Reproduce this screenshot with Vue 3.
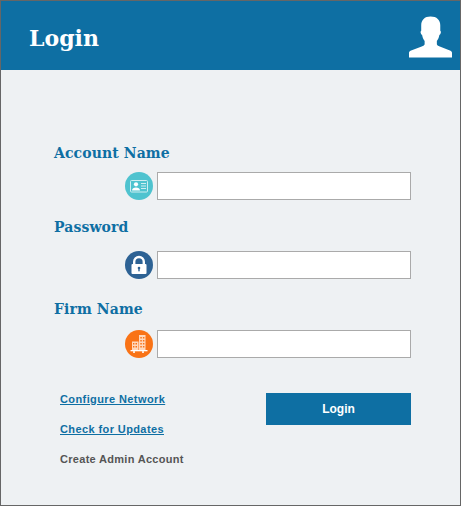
<script setup>
const fields = [
  { label: 'Account Name', icon: 'card', gap: 'first' },
  { label: 'Password', icon: 'lock', gap: 'second' },
  { label: 'Firm Name', icon: 'firm', gap: 'third' },
]
</script>

<template>
  <div class="login">
    <header class="head">
      <h1 class="title">Login</h1>
      <svg class="avatar" viewBox="0 0 44 42" width="43" height="42">
        <path fill="#fff" d="M22 0c-6 0-9.500 3.500-9.500 9v5.500c-.8.300-.8 1.800-.3 3 .4 1 1 1.500 1.300 1.700.4 2.300 1.300 4.300 2.500 5.800v3.300c0 .8-1.200 1.700-3 2.500L1.500 35C.5 35.500 0 36.300 0 37.300V42h44v-4.700c0-1-.5-1.800-1.500-2.300L31.500 30.800c-1.800-.8-3-1.700-3-2.500V25c1.200-1.500 2.100-3.500 2.500-5.800.3-.2.900-.7 1.300-1.700.5-1.200.5-2.700-.3-3V9c0-5.500-3.500-9-10-9z"/>
      </svg>
    </header>

    <form class="form" @submit.prevent>
      <div v-for="field in fields" :key="field.label" class="field" :class="field.gap">
        <label class="label">{{ field.label }}</label>
        <div class="row">
          <span class="badge" :class="field.icon">
            <svg v-if="field.icon === 'card'" viewBox="0 0 28 28" width="28" height="28">
              <rect x="5.500" y="8.500" width="17" height="11.500" rx="1" fill="none" stroke="#cfeef1" stroke-width="1"/>
              <circle cx="11" cy="12.300" r="2.100" fill="#fff"/>
              <path fill="#fff" d="M7 18.500c0-2 1.800-3 4-3s4 1 4 3z"/>
              <path stroke="#cfeef1" stroke-width="1" d="M16 11.500h5M16 14h5M16 16.500h5"/>
            </svg>
            <svg v-else-if="field.icon === 'lock'" viewBox="0 0 28 28" width="28" height="28">
              <path fill="none" stroke="#fff" stroke-width="2.400" d="M9.200 13V10.800a4.800 4.800 0 0 1 9.600 0V13"/>
              <rect x="6.500" y="13" width="15" height="10" rx="1" fill="#fff"/>
              <circle cx="14" cy="17" r="1.300" fill="#2d6294"/>
              <rect x="13.300" y="17" width="1.400" height="3.300" fill="#2d6294"/>
            </svg>
            <svg v-else viewBox="0 0 28 28" width="28" height="28">
              <path fill="#ffd9bd" fill-rule="evenodd" d="M14 5h6.500v15H14zM15.300 7v1.600h1.500V7zm2.600 0v1.600h1.500V7zm-2.600 3v1.600h1.500V10zm2.600 0v1.600h1.500V10zm-2.600 3v1.600h1.500V13zm2.600 0v1.600h1.500V13zm-2.600 3v1.600h1.500V16zm2.600 0v1.600h1.500V16z"/>
              <path fill="#ffd9bd" fill-rule="evenodd" d="M7 11.500h6.500V20H7zM8 13v1.400h1.400V13zm2.500 0v1.400H12V13zM8 16v1.400h1.400V16zm2.500 0v1.400H12V16z"/>
              <rect x="5.500" y="20" width="17" height="1.300" fill="#fff"/>
              <rect x="8" y="21.300" width="2" height="1.500" fill="#fff"/>
              <rect x="17" y="21.300" width="2" height="1.500" fill="#fff"/>
            </svg>
          </span>
          <input class="input" type="text" />
        </div>
      </div>

      <div class="actions">
        <nav class="links">
          <a class="link" href="#">Configure Network</a>
          <a class="link" href="#">Check for Updates</a>
          <span class="plain">Create Admin Account</span>
        </nav>
        <button class="submit" type="submit">Login</button>
      </div>
    </form>
  </div>
</template>

<style>
html, body {
  background: #fff;
}
</style>

<style scoped>
.login {
  box-sizing: border-box;
  width: 461px;
  height: 506px;
  border: 1px solid #666;
  background: #eef1f3;
  display: flex;
  flex-direction: column;
}

.head {
  height: 69px;
  flex: none;
  background: #0e6fa3;
  display: flex;
  align-items: center;
  justify-content: space-between;
  padding: 0 8px 0 28px;
}

.title {
  margin: 4px 0 0;
  color: #fff;
  font: bold 22px "DejaVu Serif", serif;
}

.avatar {
  margin-top: 3px;
}

.form {
  padding: 74px 49px 0 53px;
}

.field {
  display: flex;
  flex-direction: column;
}

.second {
  margin-top: 18px;
}

.third {
  margin-top: 21px;
}

.label {
  color: #0e6fa3;
  font: bold 14px/18px "DejaVu Serif", serif;
  letter-spacing: 0.1px;
}

.row {
  display: flex;
  justify-content: flex-end;
  align-items: center;
  gap: 4px;
  margin-top: 10px;
}

.second .row {
  margin-top: 15px;
}

.third .row {
  margin-top: 12px;
}

.badge {
  width: 28px;
  height: 28px;
  border-radius: 50%;
  display: block;
}

.badge svg {
  display: block;
}

.card {
  background: #4fc3cf;
}

.lock {
  background: #2d6294;
}

.firm {
  background: #f97316;
}

.input {
  box-sizing: border-box;
  width: 254px;
  height: 28px;
  border: 1px solid #aaa;
  background: #fff;
  padding: 0 4px;
  outline: none;
}

.actions {
  display: flex;
  justify-content: space-between;
  align-items: flex-start;
  margin-top: 34px;
}

.links {
  display: flex;
  flex-direction: column;
  gap: 16px;
  padding: 0 0 0 6px;
  font: bold 11px/14px "Liberation Sans", sans-serif;
  letter-spacing: 0.4px;
}

.link {
  color: #0e6fa3;
  text-decoration: underline;
}

.plain {
  color: #555;
  letter-spacing: 0.3px;
}

.submit {
  width: 145px;
  height: 32px;
  margin-top: 1px;
  border: 0;
  background: #0e6fa3;
  color: #fff;
  font: bold 12px "Liberation Sans", sans-serif;
}
</style>
